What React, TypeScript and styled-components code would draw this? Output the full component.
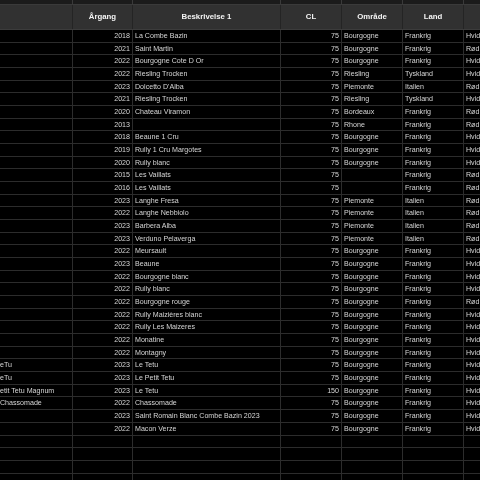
import React from "react";
import styled, { createGlobalStyle } from "styled-components";

const Global = createGlobalStyle`
  html, body { margin: 0; padding: 0; background: #000; overflow: hidden; }
  body { width: 480px; height: 480px; font-family: "Liberation Sans", Arial, sans-serif; }
`;

const COLS = "73px 60px 148px 61px 61px 61px 60px";

const Sheet = styled.div`
  width: 480px;
  height: 480px;
  overflow: hidden;
  background: #000;
  display: flex;
  flex-direction: column;
  filter: grayscale(1);
`;

const TopStrip = styled.div`
  display: grid;
  grid-template-columns: ${COLS};
  height: 5px;
  flex: none;
  background: #1b1b1b;
  border-bottom: 1px solid #3a3a3a;
  box-sizing: border-box;
`;

const StripCell = styled.div`
  border-right: 1px solid #3a3a3a;
`;

const HeaderRow = styled.div`
  display: grid;
  grid-template-columns: ${COLS};
  height: 25px;
  flex: none;
  background: #313131;
  border-bottom: 1px solid #3c3c3c;
  box-sizing: border-box;
`;

const HeadCell = styled.div`
  border-right: 1px solid #242424;
  display: flex;
  align-items: center;
  justify-content: center;
  color: #f4f4f4;
  font-weight: bold;
  font-size: 7.8px;
  white-space: nowrap;
  padding-bottom: 1px;
`;

const Row = styled.div`
  display: grid;
  grid-template-columns: ${COLS};
  height: 12.68px;
  flex: none;
  border-bottom: 1px solid #2c2c2c;
  box-sizing: border-box;
`;

const Cell = styled.div<{ $align?: "left" | "right"; $pad?: number }>`
  border-right: 1px solid #2c2c2c;
  display: flex;
  align-items: center;
  justify-content: ${(p) => (p.$align === "right" ? "flex-end" : "flex-start")};
  padding: 0 ${(p) => (p.$align === "right" ? 2 : 0)}px 0 ${(p) => (p.$align === "right" ? 0 : p.$pad ?? 2)}px;
  color: #d6d6d6;
  font-size: 7.1px;
  white-space: nowrap;
  overflow: visible;
  min-width: 0;
`;

type R = [string, string, string, string, string, string, string];

const data: R[] = [
  ["", "2018", "La Combe Bazin", "75", "Bourgogne", "Frankrig", "Hvid"],
  ["", "2021", "Saint Martin", "75", "Bourgogne", "Frankrig", "Rød"],
  ["", "2022", "Bourgogne Cote D Or", "75", "Bourgogne", "Frankrig", "Hvid"],
  ["", "2022", "Riesling Trocken", "75", "Riesling", "Tyskland", "Hvid"],
  ["", "2023", "Dolcetto D'Alba", "75", "Piemonte", "Italien", "Rød"],
  ["", "2021", "Riesling Trocken", "75", "Riesling", "Tyskland", "Hvid"],
  ["", "2020", "Chateau Viramon", "75", "Bordeaux", "Frankrig", "Rød"],
  ["", "2013", "", "75", "Rhone", "Frankrig", "Rød"],
  ["", "2018", "Beaune 1 Cru", "75", "Bourgogne", "Frankrig", "Hvid"],
  ["", "2019", "Rully 1 Cru Margotes", "75", "Bourgogne", "Frankrig", "Hvid"],
  ["", "2020", "Rully blanc", "75", "Bourgogne", "Frankrig", "Hvid"],
  ["", "2015", "Les Vaillats", "75", "", "Frankrig", "Rød"],
  ["", "2016", "Les Vaillats", "75", "", "Frankrig", "Rød"],
  ["", "2023", "Langhe Fresa", "75", "Piemonte", "Italien", "Rød"],
  ["", "2022", "Langhe Nebbiolo", "75", "Piemonte", "Italien", "Rød"],
  ["", "2023", "Barbera Alba", "75", "Piemonte", "Italien", "Rød"],
  ["", "2023", "Verduno Pelaverga", "75", "Piemonte", "Italien", "Rød"],
  ["", "2022", "Meursault", "75", "Bourgogne", "Frankrig", "Hvid"],
  ["", "2023", "Beaune", "75", "Bourgogne", "Frankrig", "Hvid"],
  ["", "2022", "Bourgogne blanc", "75", "Bourgogne", "Frankrig", "Hvid"],
  ["", "2022", "Rully blanc", "75", "Bourgogne", "Frankrig", "Hvid"],
  ["", "2022", "Bourgogne rouge", "75", "Bourgogne", "Frankrig", "Rød"],
  ["", "2022", "Rully Maizières blanc", "75", "Bourgogne", "Frankrig", "Hvid"],
  ["", "2022", "Rully Les Maizeres", "75", "Bourgogne", "Frankrig", "Hvid"],
  ["", "2022", "Monatine", "75", "Bourgogne", "Frankrig", "Hvid"],
  ["", "2022", "Montagny", "75", "Bourgogne", "Frankrig", "Hvid"],
  ["eTu", "2023", "Le Tetu", "75", "Bourgogne", "Frankrig", "Hvid"],
  ["eTu", "2023", "Le Petit Tetu", "75", "Bourgogne", "Frankrig", "Hvid"],
  ["etit Tetu Magnum", "2023", "Le Tetu", "150", "Bourgogne", "Frankrig", "Hvid"],
  ["Chassomade", "2022", "Chassomade", "75", "Bourgogne", "Frankrig", "Hvid"],
  ["", "2023", "Saint Romain Blanc Combe Bazin 2023", "75", "Bourgogne", "Frankrig", "Hvid"],
  ["", "2022", "Macon Verze", "75", "Bourgogne", "Frankrig", "Hvid"],
];

const EMPTY_ROWS = 4;
const headers = ["", "Årgang", "Beskrivelse 1", "CL", "Område", "Land", ""];

export default function App() {
  const empties: R[] = Array.from({ length: EMPTY_ROWS }, () => ["", "", "", "", "", "", ""]);
  return (
    <>
      <Global />
      <Sheet>
        <TopStrip>
          {headers.map((_, i) => (
            <StripCell key={i} />
          ))}
        </TopStrip>
        <HeaderRow>
          {headers.map((h, i) => (
            <HeadCell key={i}>{h}</HeadCell>
          ))}
        </HeaderRow>
        {[...data, ...empties].map((r, i) => (
          <Row key={i}>
            <Cell $pad={0}>{r[0]}</Cell>
            <Cell $align="right">{r[1]}</Cell>
            <Cell>{r[2]}</Cell>
            <Cell $align="right">{r[3]}</Cell>
            <Cell>{r[4]}</Cell>
            <Cell>{r[5]}</Cell>
            <Cell>{r[6]}</Cell>
          </Row>
        ))}
      </Sheet>
    </>
  );
}
